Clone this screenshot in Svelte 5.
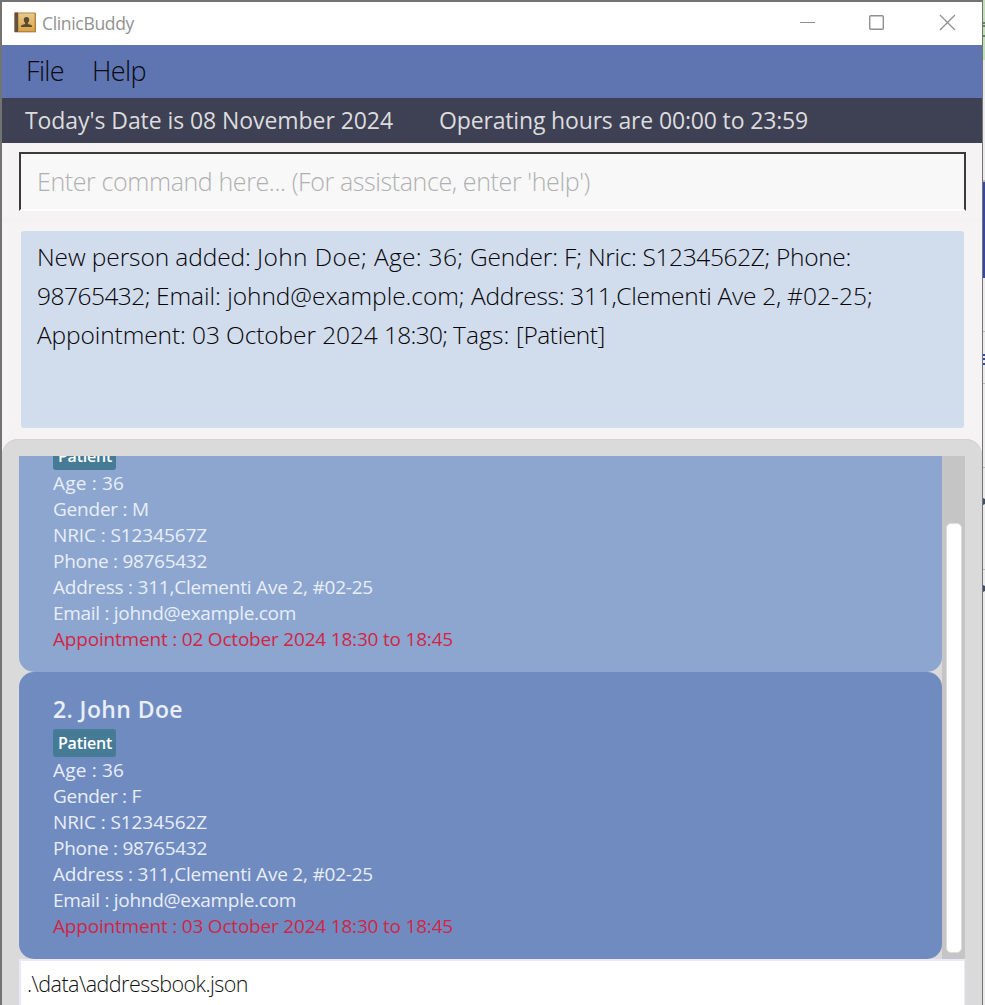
<script>
  const result = [
    [['New person added: ', 220], ['John Doe; ', 117], ['Age: 36; ', 96], ['Gender: F; ', 118], ['Nric: S1234562Z; ', 188], ['Phone:', 75]],
    [['98765432; ', 119], ['Email: johnd@example.com; ', 315], ['Address: 311,Clementi Ave 2, ', 316], ['#02-25;', 86]],
    [['Appointment: ', 155], ['03 October 2024 ', 192], ['18:30; ', 69], ['Tags: ', 63], ['[Patient]', 89]]
  ];
  const people = [
    {
      name: '1. John Doe',
      rows: [['Age : 36', 71], ['Gender : M', 96], ['NRIC : S1234567Z', 154], ['Phone : 98765432', 154],
        ['Address : 311,Clementi Ave 2, #02-25', 320], ['Email : johnd@example.com', 243]],
      appointment: 'Appointment : 02 October 2024 18:30 to 18:45'
    },
    {
      name: '2. John Doe',
      rows: [['Age : 36', 71], ['Gender : F', 88], ['NRIC : S1234562Z', 154], ['Phone : 98765432', 154],
        ['Address : 311,Clementi Ave 2, #02-25', 320], ['Email : johnd@example.com', 243]],
      appointment: 'Appointment : 03 October 2024 18:30 to 18:45'
    }
  ];

  // Tracks a label so that it spans the given width.
  function fit(node, width) {
    const natural = node.getBoundingClientRect().width;
    node.style.letterSpacing = `${(width - natural) / node.textContent.length}px`;
  }
</script>

<div class="screen">
  <div class="window">
    <header class="titlebar">
      <svg class="book" width="23" height="22" viewBox="0 0 23 22">
        <defs>
          <linearGradient id="cover" x1="0" y1="0" x2="0" y2="1">
            <stop offset="0" stop-color="#e9c98d" /><stop offset="1" stop-color="#d9a444" />
          </linearGradient>
        </defs>
        <rect x="0.5" y="0.5" width="21.500" height="20" rx="1" fill="#b28543" />
        <path d="M1 20.5H21.500" stroke="#d8d0c5" stroke-width="1" />
        <rect x="4.500" y="1.500" width="16" height="17.500" fill="url(#cover)" />
        <rect x="0.5" y="0.5" width="3.500" height="19.500" fill="#65503e" />
        <path d="M12.500 5c1.800 0 2.700 1.200 2.700 2.800 0 1.400-.6 2.300-1.300 3v1.100l3.200 1.100c.7.300.9.800.9 2H7c0-1.200.2-1.700.9-2l3.200-1.100v-1.100c-.7-.7-1.300-1.600-1.300-3C9.800 6.200 10.700 5 12.500 5z" fill="#5a4a32" />
      </svg>
      <span class="title" use:fit={92}>ClinicBuddy</span>
      <svg class="controls" width="160" height="20" viewBox="0 0 160 20" fill="none" stroke="#909090">
        <path d="M0 9.500H15" />
        <rect x="69.700" y="2.700" width="13.600" height="13.600" rx="1" stroke-width="1.400" />
        <path d="M140 2l15 15M155 2l-15 15" stroke-width="1.300" />
      </svg>
    </header>

    <nav class="menu">
      <span use:fit={38}>File</span>
      <span use:fit={54}>Help</span>
    </nav>

    <div class="info">
      <span use:fit={368}>Today's Date is 08 November 2024</span>
      <span use:fit={369}>Operating hours are 00:00 to 23:59</span>
    </div>

    <div class="command">
      <div class="input"><span use:fit={553}>Enter command here... (For assistance, enter 'help')</span></div>
    </div>

    <div class="result">
      <div class="result-box">
        {#each result as line}
          <div class="line">
            {#each line as [part, width]}<span use:fit={width}>{part}</span>{/each}
          </div>
        {/each}
      </div>
    </div>

    <main class="panel">
      <div class="list">
        <div class="cards">
          {#each people as person, i}
            <article class:even={i === 1}>
              <h2><span use:fit={130}>{person.name}</span></h2>
              <div class="tag"><span use:fit={54}>Patient</span></div>
              {#each person.rows as [text, width]}
                <div class="row"><span use:fit={width}>{text}</span></div>
              {/each}
              <div class="row due"><span use:fit={400}>{person.appointment}</span></div>
            </article>
          {/each}
        </div>
        <div class="track"><div class="thumb"></div></div>
      </div>
      <footer><span use:fit={221}>.\data\addressbook.json</span></footer>
    </main>
  </div>

  <aside>
    <svg width="2" height="1005" viewBox="0 0 2 1005">
      <path fill="#c1e0b4" d="M0 0h2v60H0z" />
      <path fill="#6f8468" d="M0 22h2v2H0zM0 25h2v2H0zM0 35h2v2H0z" />
      <path fill="#bbb" d="M0 180h2v2H0zM0 331h2v1H0zM0 383h2v1H0zM0 467h2v1H0zM0 569h2v1H0z" />
      <path fill="#3949a3" d="M0 182h2v96H0zM0 354h2v2H0zM0 358h2v2H0zM0 363h2v2H0z" />
      <path fill="#405066" d="M0 498l2 1v5l-2 1zM0 585l2 1v5l-2 1z" />
    </svg>
  </aside>
</div>

<style>
  :global(body) { overflow: hidden; }
  .screen {
    display: flex;
    width: 985px;
    height: 1005px;
    overflow: hidden;
    box-sizing: border-box;
    font-family: "Open Sans", "Noto Sans", sans-serif;
    font-weight: 400;
  }
  .window {
    flex: none;
    width: 983px;
    height: 1005px;
    box-sizing: border-box;
    display: flex;
    flex-direction: column;
    border: solid #737373;
    border-width: 2px 1px 0 2px;
    background: #f5f3f4;
    overflow: hidden;
  }
  aside { width: 2px; background: #ececec; }
  aside svg { display: block; }
  .window > * { flex: none; box-sizing: border-box; }
  span { flex: none; white-space: pre; }

  .titlebar { height: 43px; background: #fff; display: flex; align-items: center; padding: 0 22px 2px 12px; }
  .book { margin-right: 5px; }
  .title { font-size: 17.500px; color: #929292; line-height: 24px; padding-top: 1px; }
  .controls { margin-left: auto; }

  .menu { height: 53px; background: #5f75b1; display: flex; align-items: center; gap: 28px; padding-left: 24px; font-size: 27px; font-weight: 300; color: #08090f; line-height: 51px; padding-bottom: 2px; }
  .info { height: 45px; background: #3e4053; display: flex; align-items: center; gap: 46px; padding-left: 23px; font-size: 23px; color: #dcdcdf; line-height: 45px; }

  .command { height: 77px; padding: 9px 16px 0 17px; border-bottom: 1px solid #f2f1f0; }
  .input {
    box-sizing: border-box;
    height: 59px;
    background: #f8f8f8;
    border: 2px solid #3a3a3d;
    border-bottom-color: #fff;
    padding-left: 16px;
    font-size: 25px;
    font-weight: 300;
    color: #b0b0b2;
    line-height: 55px;
  }

  .result { height: 219px; padding: 11px 18px 0 19px; }
  .result-box { height: 197px; box-sizing: border-box; border-radius: 3px; background: #d1dcec; padding: 6px 15px 6px 16px; font-size: 24.500px; font-weight: 300; color: #050508; line-height: 39px; }
  .line { display: flex; }

  .panel { flex: 1 0 566px; display: flex; flex-direction: column; padding: 17px 17px 0; background: #dadada; border-radius: 16px 16px 0 0; box-shadow: inset 0 1px #d2d3d3; }
  .list { height: 503px; display: flex; overflow: hidden; }
  .cards { width: 923px; height: 503px; display: flex; flex-direction: column; justify-content: flex-end; overflow: hidden; }
  article { flex: none; box-sizing: border-box; height: 287px; padding: 22px 34px 0; border-radius: 15px; background: #8ca6cf; color: #e9eef8; }
  article.even { background: #708bc0; }
  h2 { margin: 0; height: 35px; font-size: 23px; line-height: 31px; font-weight: 600; }
  .tag { box-sizing: border-box; width: 63px; height: 28px; border-radius: 3px; background: #457b95; color: #fff; padding-left: 5px; font-size: 16px; font-weight: 600; line-height: 29px; }
  .row { height: 26px; font-size: 19px; line-height: 26px; }
  .due { color: #d22545; }
  .track { width: 23px; box-sizing: border-box; background: #c5c5c5; padding: 67px 4px 6px; }
  .thumb { box-sizing: border-box; height: 430px; width: 16px; border: 1px solid #dcdcdc; border-radius: 5px; background: #fff; }
  footer { box-sizing: border-box; height: 46px; border: solid #eee6fb; border-width: 2px 1px 0 2px; background: #fff; padding-left: 6px; font-size: 21.500px; font-weight: 300; color: #111; line-height: 46px; }
</style>
